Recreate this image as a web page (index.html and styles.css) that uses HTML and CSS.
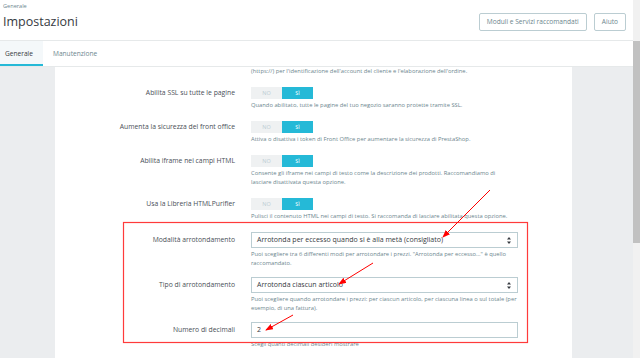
FILE: index.html
```html
<!DOCTYPE html>
<html lang="it">
<head>
    <meta charset="UTF-8">
    <title>Impostazioni</title>
    <link rel="stylesheet" href="styles.css">
</head>
<body>
    <div class="page">
        <div class="header">
            <div>
                <div class="breadcrumb">Generale</div>
                <h1 class="page-title">Impostazioni</h1>
            </div>
            <div class="toolbar">
                <span class="btn">Moduli e Servizi raccomandati</span>
                <span class="btn">Aiuto</span>
            </div>
        </div>

        <div class="tabs">
            <span class="tab active">Generale</span>
            <span class="tab">Manutenzione</span>
        </div>

        <div class="content">
            <div class="card">
                <div class="help help-top">(https://) per l'identificazione dell'account del cliente e l'elaborazione dell'ordine.</div>

                <div class="form-group">
                    <div class="label label-switch">Abilita SSL su tutte le pagine</div>
                    <div class="control">
                        <div class="switch"><span class="off">NO</span><span class="on">SÌ</span></div>
                        <div class="help">Quando abilitato, tutte le pagine del tuo negozio saranno protette tramite SSL.</div>
                    </div>
                </div>

                <div class="form-group">
                    <div class="label label-switch">Aumenta la sicurezza del front office</div>
                    <div class="control">
                        <div class="switch"><span class="off">NO</span><span class="on">SÌ</span></div>
                        <div class="help">Attiva o disattiva i token di Front Office per aumentare la sicurezza di PrestaShop.</div>
                    </div>
                </div>

                <div class="form-group">
                    <div class="label label-switch">Abilita iframe nei campi HTML</div>
                    <div class="control">
                        <div class="switch"><span class="off">NO</span><span class="on">SÌ</span></div>
                        <div class="help">Consente gli iframe nei campi di testo come la descrizione dei prodotti. Raccomandiamo di<br>lasciare disattivata questa opzione.</div>
                    </div>
                </div>

                <div class="form-group">
                    <div class="label label-switch">Usa la Libreria HTMLPurifier</div>
                    <div class="control">
                        <div class="switch"><span class="off">NO</span><span class="on">SÌ</span></div>
                        <div class="help">Pulisci il contenuto HTML nei campi di testo. Si raccomanda di lasciare abilitata questa opzione.</div>
                    </div>
                </div>

                <div class="form-group group-field">
                    <div class="label label-field">Modalità arrotondamento</div>
                    <div class="control">
                        <div class="select">
                            <span>Arrotonda per eccesso quando si è alla metà (consigliato)</span>
                            <svg class="caret" width="4" height="7" viewBox="0 0 4 7"><path d="M2 0 L4 2.6 L0 2.6 Z M0 4.4 L4 4.4 L2 7 Z" fill="#363a41"/></svg>
                        </div>
                        <div class="help">Puoi scegliere tra 6 differenti modi per arrotondare i prezzi. "Arrotonda per eccesso..." è quello raccomandato.</div>
                    </div>
                </div>

                <div class="form-group group-field">
                    <div class="label label-field">Tipo di arrotondamento</div>
                    <div class="control">
                        <div class="select">
                            <span>Arrotonda ciascun articolo</span>
                            <svg class="caret" width="4" height="7" viewBox="0 0 4 7"><path d="M2 0 L4 2.6 L0 2.6 Z M0 4.4 L4 4.4 L2 7 Z" fill="#363a41"/></svg>
                        </div>
                        <div class="help">Puoi scegliere quando arrotondare i prezzi: per ciascun articolo, per ciascuna linea o sul totale (per esempio, di una fattura).</div>
                    </div>
                </div>

                <div class="form-group group-field">
                    <div class="label label-field">Numero di decimali</div>
                    <div class="control">
                        <div class="input">2</div>
                        <div class="help">Scegli quanti decimali desideri mostrare</div>
                    </div>
                </div>
            </div>
            <div class="aside"></div>
        </div>
    </div>

    <div class="scrollbar"><div class="scrollbar-thumb"></div></div>

    <!-- annotations drawn over the screenshot -->
    <svg class="marks" width="640" height="358" viewBox="0 0 640 358">
        <defs>
            <marker id="head" markerWidth="8" markerHeight="6" refX="7" refY="3" orient="auto" markerUnits="userSpaceOnUse">
                <path d="M0 0 L8 3 L0 6 Z" fill="#f00"/>
            </marker>
        </defs>
        <rect x="123.5" y="222.5" width="404" height="120" fill="none" stroke="#ff3b3b" stroke-width="1.2"/>
        <line x1="490" y1="190" x2="443" y2="237" stroke="#f00" stroke-width="1" marker-end="url(#head)"/>
        <line x1="373" y1="263" x2="339" y2="284" stroke="#f00" stroke-width="1" marker-end="url(#head)"/>
        <line x1="293" y1="315" x2="266" y2="330" stroke="#f00" stroke-width="1" marker-end="url(#head)"/>
    </svg>
</body>
</html>
```

FILE: styles.css
```css
* {
    margin: 0;
    padding: 0;
    box-sizing: border-box;
}

body {
    font-family: 'Open Sans', 'Liberation Sans', sans-serif;
    width: 640px;
    height: 358px;
    overflow: hidden;
    display: flex;
    position: relative;
    background: #fff;
    color: #363a41;
}

.page {
    flex: 1;
    display: flex;
    flex-direction: column;
}

.header {
    height: 41px;
    border-bottom: 1px solid #e6e9ea;
    display: flex;
    justify-content: space-between;
    padding: 0 7px 0 3px;
}

.breadcrumb {
    font-size: 5.6px;
    line-height: 8px;
    margin-top: 2px;
    color: #6c868e;
}

.page-title {
    font-size: 12.5px;
    font-weight: 400;
    line-height: 16px;
    margin-top: 4px;
}

.toolbar {
    display: flex;
    gap: 7px;
    margin-top: 13px;
}

.btn {
    height: 18px;
    border: 1px solid #bbcdd2;
    border-radius: 2px;
    padding: 0 7px;
    font-size: 6.6px;
    line-height: 16px;
    color: #6c868e;
}

.tabs {
    height: 26px;
    border-bottom: 1px solid #e6e9ea;
    display: flex;
}

.tab {
    font-size: 6.6px;
    line-height: 25px;
    padding: 0 10px;
    color: #6c868e;
}

.tab.active {
    padding-left: 5px;
    background: #f4f8fa;
    color: #363a41;
    border-bottom: 2px solid #25b9d7;
}

.content {
    flex: 1;
    display: flex;
    background: #ebedef;
    padding-left: 55px;
}

.card {
    width: 517px;
    background: #fff;
}

.help {
    font-size: 5.8px;
    line-height: 9px;
    color: #6c868e;
    margin-top: 2px;
}

.help-top {
    margin: 0 0 11px 196px;
}

.form-group {
    display: flex;
    margin-bottom: 11px;
}

.group-field {
    margin-bottom: 9px;
}

.label {
    width: 188px;
    padding-right: 8px;
    text-align: right;
    font-size: 6.8px;
    color: #4a4f57;
}

.label-switch {
    line-height: 12px;
}

.label-field {
    line-height: 16px;
}

.control {
    width: 267px;
    margin-left: 8px;
}

.switch {
    display: flex;
    width: 62px;
    height: 12px;
}

.switch span {
    flex: 1;
    text-align: center;
    font-size: 5.5px;
    line-height: 12px;
}

.switch .off {
    background: #eff1f2;
    color: #bbcdd2;
}

.switch .on {
    background: #25b9d7;
    color: #fff;
}

.select,
.input {
    height: 16px;
    border: 1px solid #bbcdd2;
    padding: 0 6px 0 5px;
    font-size: 7px;
    line-height: 14px;
    display: flex;
    justify-content: space-between;
    align-items: center;
}

.scrollbar {
    width: 7px;
    background: #f1f1f1;
    padding-top: 41px;
}

.scrollbar-thumb {
    height: 202px;
    background: #c1c1c1;
}

.marks {
    position: absolute;
    top: 0;
    left: 0;
    pointer-events: none;
}
```
